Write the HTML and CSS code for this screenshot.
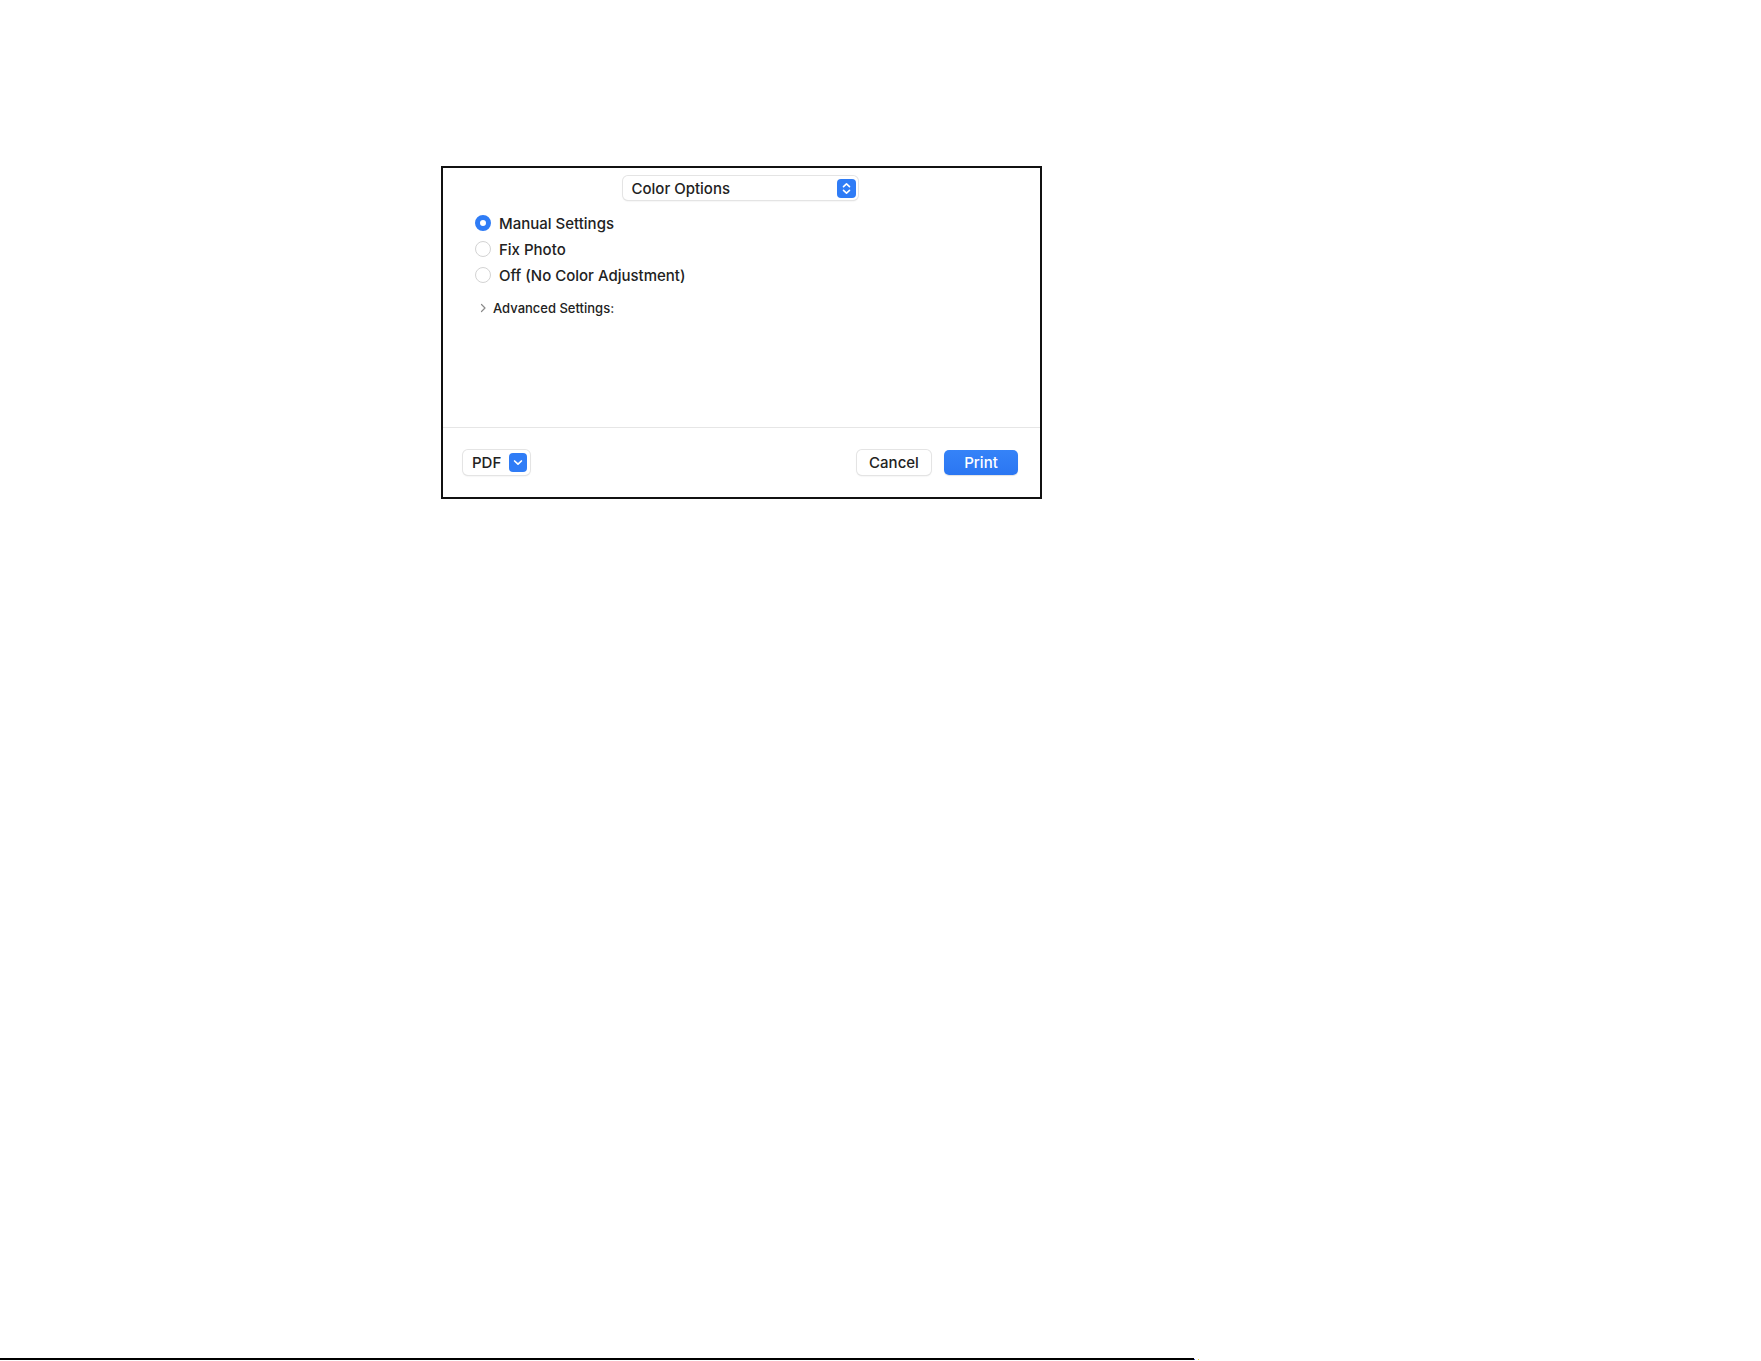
FILE: index.html
```html
<!DOCTYPE html>
<html lang="en">
<head>
<meta charset="utf-8">
<title>Print – Color Options</title>
<link rel="stylesheet" href="styles.css">
</head>
<body>
<div class="page">
  <div class="dialog">
    <div class="panel">
      <div class="popup-row">
        <div class="popup">
          <span class="popup-label">Color Options</span>
          <span class="stepper">
            <svg width="19" height="19" viewBox="0 0 19 19" aria-hidden="true">
              <path d="M6.5 7.6 L9.5 4.8 L12.5 7.6" fill="none" stroke="#fff" stroke-width="1.6" stroke-linecap="round" stroke-linejoin="round"/>
              <path d="M6.5 11.4 L9.5 14.2 L12.5 11.4" fill="none" stroke="#fff" stroke-width="1.6" stroke-linecap="round" stroke-linejoin="round"/>
            </svg>
          </span>
        </div>
      </div>
      <ul class="radios">
        <li class="radio-row"><span class="radio is-on"></span><span class="radio-label">Manual Settings</span></li>
        <li class="radio-row"><span class="radio"></span><span class="radio-label">Fix Photo</span></li>
        <li class="radio-row"><span class="radio"></span><span class="radio-label">Off (No Color Adjustment)</span></li>
      </ul>
      <div class="disclosure">
        <svg class="chev" width="7" height="10" viewBox="0 0 7 10" aria-hidden="true">
          <path d="M1.5 1.5 L5 5 L1.5 8.5" fill="none" stroke="#8a8a8a" stroke-width="1.2" stroke-linecap="round" stroke-linejoin="round"/>
        </svg>
        <span class="disclosure-label">Advanced Settings:</span>
      </div>
    </div>
    <div class="divider"></div>
    <div class="footer">
      <div class="pdf-btn">
        <span class="pdf-label">PDF</span>
        <span class="pdf-arrow">
          <svg width="18" height="19" viewBox="0 0 18 19" aria-hidden="true">
            <path d="M5.6 8 L9 11.2 L12.4 8" fill="none" stroke="#fff" stroke-width="1.7" stroke-linecap="round" stroke-linejoin="round"/>
          </svg>
        </span>
      </div>
      <div class="spacer"></div>
      <div class="btn">Cancel</div>
      <div class="btn btn-primary">Print</div>
    </div>
  </div>
  <div class="rule">
    <span class="rule-line"></span>
    <span class="rule-dot rule-dot-blue"></span>
    <span class="rule-dot rule-dot-yellow"></span>
  </div>
</div>
</body>
</html>
```

FILE: styles.css
```css
html, body {
  margin: 0;
  padding: 0;
  background: #fff;
}

body {
  font-family: "Inter", "Liberation Sans", "Noto Sans", sans-serif;
  color: #222;
}

.page {
  width: 1761px;
  height: 1361px;
  display: flex;
  flex-direction: column;
  overflow: hidden;
}

/* dialog frame */
.dialog {
  box-sizing: border-box;
  width: 601px;
  height: 333px;
  margin: 166px 0 0 441px;
  border: 2px solid #111;
  display: flex;
  flex-direction: column;
  background: #fff;
}

.panel {
  height: 259px;
  padding-top: 8px;
  box-sizing: border-box;
}

.popup-row {
  display: flex;
  justify-content: center;
}

.popup {
  box-sizing: border-box;
  width: 235px;
  height: 24px;
  border-radius: 5px;
  background: #fff;
  box-shadow: 0 0 0 1px #e4e4e4, 0 1px 2px rgba(0, 0, 0, 0.12);
  display: flex;
  align-items: center;
  padding: 0 2px 0 9px;
  margin-left: -3px;
}

.popup-label {
  flex: 1;
  font-size: 15px;
  font-weight: 500;
}

.stepper {
  width: 19px;
  height: 19px;
  border-radius: 4px;
  background: #2f7cf6;
  display: flex;
}

/* radio group */
.radios {
  list-style: none;
  margin: 10px 0 0;
  padding: 0 0 0 32px;
}

.radio-row {
  height: 26px;
  display: flex;
  align-items: center;
  gap: 8px;
}

.radio {
  box-sizing: border-box;
  width: 16px;
  height: 16px;
  border-radius: 50%;
  border: 1px solid #d3d3d3;
  background: #fff;
}

.radio.is-on {
  border: 5px solid #2f7cf6;
  background: #fff;
}

.radio-label {
  font-size: 15px;
  font-weight: 500;
}

.disclosure {
  height: 20px;
  margin: 10px 0 0 37px;
  display: flex;
  align-items: center;
  gap: 6px;
}

.disclosure-label {
  font-size: 13px;
  font-weight: 500;
}

.divider {
  height: 1px;
  background: #e6e6e6;
}

/* footer buttons */
.footer {
  flex: 1;
  display: flex;
  align-items: center;
  padding: 0 22px 0 20px;
  gap: 13px;
}

.spacer {
  flex: 1;
}

.pdf-btn {
  box-sizing: border-box;
  width: 67px;
  height: 25px;
  border-radius: 5px;
  background: #fff;
  box-shadow: 0 0 0 1px #e4e4e4, 0 1px 2px rgba(0, 0, 0, 0.12);
  display: flex;
  align-items: center;
  padding: 0 3px 0 9px;
}

.pdf-label {
  flex: 1;
  font-size: 15px;
  font-weight: 500;
}

.pdf-arrow {
  width: 18px;
  height: 19px;
  border-radius: 4px;
  background: #2f7cf6;
  display: flex;
}

.btn {
  box-sizing: border-box;
  width: 74px;
  height: 25px;
  border-radius: 5px;
  background: #fff;
  box-shadow: 0 0 0 1px #e4e4e4, 0 1px 2px rgba(0, 0, 0, 0.12);
  display: flex;
  align-items: center;
  justify-content: center;
  font-size: 15px;
  font-weight: 500;
}

.btn-primary {
  background: linear-gradient(#3583f8, #2b76f2);
  box-shadow: 0 1px 1px rgba(0, 0, 0, 0.12);
  color: #fff;
}

/* page foot rule */
.rule {
  margin-top: auto;
  margin-bottom: 1px;
  height: 2px;
  display: flex;
  align-items: flex-end;
}

.rule-line {
  width: 1194px;
  height: 2px;
  background: #000;
}

.rule-dot {
  width: 1px;
  height: 1px;
}

.rule-dot-blue {
  background: #3a4fd0;
}

.rule-dot-yellow {
  margin-left: 3px;
  background: #e8d23a;
}
```
